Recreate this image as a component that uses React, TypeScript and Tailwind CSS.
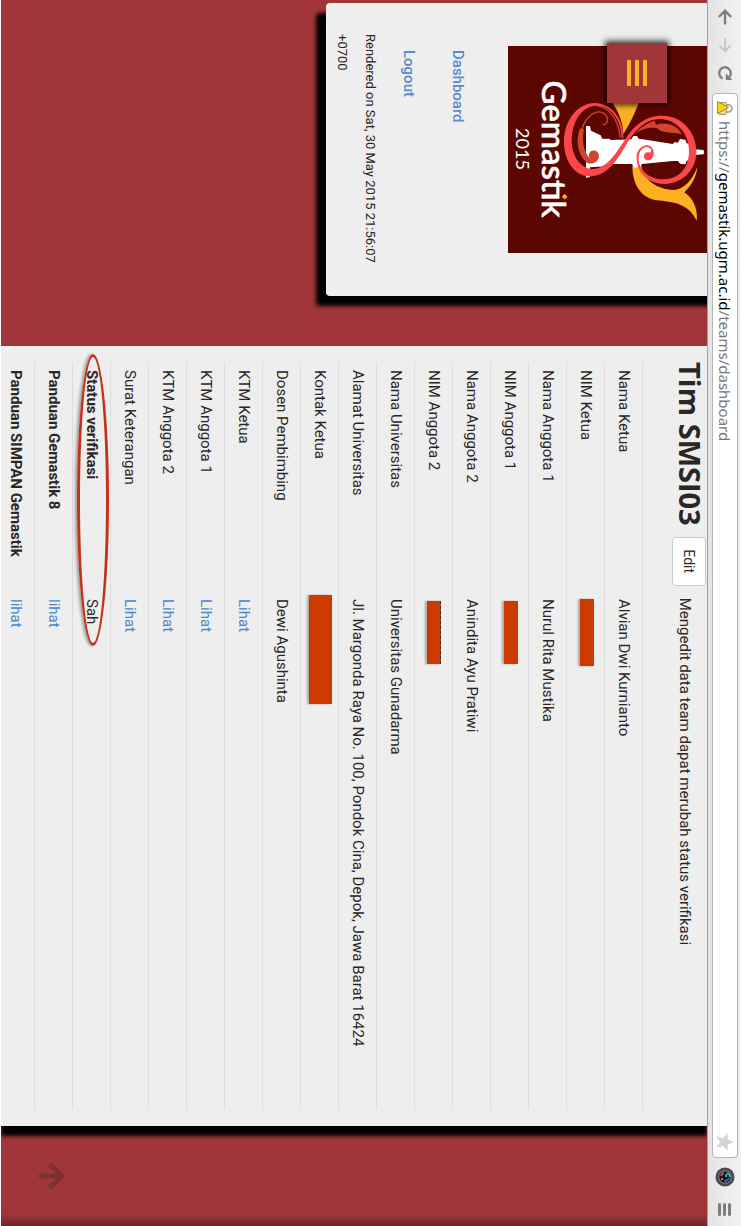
import type { ReactNode } from "react";

type Row = { label: string; value: ReactNode; bold?: boolean; circled?: boolean };

function Redacted({ className, label }: { className: string; label: string }) {
  return <span role="img" aria-label={label} className={`block bg-[#cc3a00] shadow-[0_2px_2px_rgba(0,0,0,0.3)] ${className}`} />;
}

function DocLink({ children }: { children: string }) {
  return (
    <a href="#" className="text-[#4a86cf]">
      {children}
    </a>
  );
}

const rows: Row[] = [
  { label: "Nama Ketua", value: "Alvian Dwi Kurnianto" },
  { label: "NIM Ketua", value: <Redacted label="NIM Ketua" className="mb-0.5 h-3.5 w-[67px]" /> },
  { label: "Nama Anggota 1", value: "Nurul Rita Mustika" },
  { label: "NIM Anggota 1", value: <Redacted label="NIM Anggota 1" className="mb-0.5 ml-0.5 h-3.5 w-[63px]" /> },
  { label: "Nama Anggota 2", value: "Anindita Ayu Pratiwi" },
  {
    label: "NIM Anggota 2",
    value: <Redacted label="NIM Anggota 2" className="ml-0.5 h-3.5 w-[63px] border-t border-dashed border-[#333]" />,
  },
  { label: "Nama Universitas", value: "Universitas Gunadarma" },
  { label: "Alamat Universitas", value: "Jl. Margonda Raya No. 100, Pondok Cina, Depok, Jawa Barat 16424" },
  { label: "Kontak Ketua", value: <Redacted label="Kontak Ketua" className="-ml-1 h-[23px] w-[109px]" /> },
  { label: "Dosen Pembimbing", value: "Dewi Agushinta" },
  { label: "KTM Ketua", value: <DocLink>Lihat</DocLink> },
  { label: "KTM Anggota 1", value: <DocLink>Lihat</DocLink> },
  { label: "KTM Anggota 2", value: <DocLink>Lihat</DocLink> },
  { label: "Surat Keterangan", value: <DocLink>Lihat</DocLink> },
  { label: "Status verifikasi", value: "Sah", bold: true, circled: true },
  { label: "Panduan Gemastik 8", value: <DocLink>lihat</DocLink>, bold: true },
  { label: "Panduan SIMPAN Gemastik", value: <DocLink>lihat</DocLink>, bold: true },
];

function BrowserBar() {
  return (
    <header className="relative z-10 flex h-[34px] shrink-0 items-start border-b border-[#a0a0a0] bg-linear-to-b from-[#f1f1f1] to-[#e4e4e4] pt-[3px] pl-[9px]">
      <div className="flex h-[26px] items-center gap-3">
        <button aria-label="Back" className="text-[#808080]">
          <svg width="16" height="16" viewBox="0 0 16 16" fill="none" stroke="currentColor" strokeWidth="2.4">
            <path d="M15.500 8H2.500M8 1.800L1.800 8L8 14.200" />
          </svg>
        </button>
        <button aria-label="Forward" className="text-[#c8c8c8]">
          <svg width="16" height="16" viewBox="0 0 16 16" fill="none" stroke="currentColor" strokeWidth="2">
            <path d="M1 8H14M8.500 2.500L14 8L8.500 13.500" />
          </svg>
        </button>
        <button aria-label="Reload" className="text-[#808080]">
          <svg width="16" height="16" viewBox="0 0 16 16">
            <path d="M13.400 10.400A5.800 5.800 0 1 1 12.300 4" fill="none" stroke="currentColor" strokeWidth="2.400" />
            <path d="M15 0.500V7.200H8.300Z" fill="currentColor" />
          </svg>
        </button>
      </div>
      <div className="ml-3 flex h-[26px] min-w-0 flex-1 items-center rounded-[4px] border border-[#b4b4b4] bg-white px-1.5">
        <svg width="16" height="16" viewBox="0 0 16 16" className="shrink-0">
          <path d="M5 7V4.500a3.500 3.500 0 0 1 7 0V7" fill="none" stroke="#a9a9a9" strokeWidth="1.800" />
          <rect x="2.500" y="6.500" width="12" height="8" rx="1" fill="#ead98c" stroke="#a89a5a" />
          <path d="M7.500 4.500L13.500 15.500H1.500Z" fill="#f5d516" stroke="#8a7420" strokeWidth="0.800" />
        </svg>
        <p className="ml-[5px] flex-1 truncate font-['Noto_Sans',sans-serif] text-[15px] leading-5 text-[#777]">
          https://<span className="text-black">gemastik.ugm.ac.id</span>/teams/dashboard
        </p>
        <button aria-label="Bookmark">
          <svg width="18" height="18" viewBox="0 0 18 18" fill="#d4d4d4">
            <path d="M9 0L11.400 6.200L18 6.600L12.900 10.800L14.600 17.500L9 13.800L3.400 17.500L5.100 10.800L0 6.600L6.600 6.200Z" />
          </svg>
        </button>
      </div>
      <div className="ml-[9px] flex h-[26px] items-center gap-4 pr-[10px]">
        <button aria-label="Camera">
          <svg width="20" height="20" viewBox="0 0 20 20">
            <circle cx="10" cy="10" r="9.500" fill="#4b4b4d" />
            <circle cx="10" cy="10" r="7" fill="#6d6e70" />
            <circle cx="10" cy="10" r="5.600" fill="#101522" />
            <path d="M6 8a4.500 4.500 0 0 1 4-3" stroke="#21b7d8" strokeWidth="1.800" fill="none" />
            <path d="M11 6a4 4 0 0 1 2.500 5" stroke="#4e6bdd" strokeWidth="1.600" fill="none" />
            <path d="M6 11a4.500 4.500 0 0 0 3 3" stroke="#d7389b" strokeWidth="2" fill="none" />
            <path d="M7 8.500l3 .5" stroke="#83d34a" strokeWidth="1.600" />
            <circle cx="12" cy="13" r="1" fill="#e9a33c" />
          </svg>
        </button>
        <button aria-label="Browser menu" className="flex flex-col gap-0.5">
          <span className="h-[3px] w-[13px] rounded-full bg-[#7d7d7d]" />
          <span className="h-[3px] w-[13px] rounded-full bg-[#7d7d7d]" />
          <span className="h-[3px] w-[13px] rounded-full bg-[#7d7d7d]" />
        </button>
      </div>
    </header>
  );
}

function Logo() {
  return (
    <svg viewBox="0 0 207 199" className="block w-full bg-[#5c0602]" role="img" aria-label="Gemastik 2015">
      <g transform="matrix(0 -0.33333 0.33333 0 -46 207)">
        <path d="M335 306L418 306C404 340 388 375 370 402C369 370 357 335 335 306Z" fill="#fdb022" />
        <path d="M397 498C397 548 420 590 462 599C505 606 562 602 590 662C594 640 586 598 553 577C575 555 590 530 592 500C575 545 550 568 520 570C470 568 430 540 424 496Z" fill="#fdb022" />
        <path d="M402 405C418 385 440 368 464 362L468 374C500 364 530 376 546 402C515 396 485 400 470 384C445 380 420 388 402 405Z" fill="#d2452f" />
        <path d="M258 378L270 378L273 392L302 406L307 416L328 416L332 420L394 418L400 408L411 408L416 416L428 418L518 432L524 426L534 428L540 417L556 419L560 430L568 431L574 447L610 450L613 457L610 463L574 466L568 481L560 482L556 493L540 491L534 483L518 483L426 492L420 501L402 503L396 492L328 492L322 499L270 502L270 531L258 533Z" fill="#ffffff" />
        <path d="M240 385C226 420 232 466 262 489C280 495 297 484 297 467C296 452 276 446 269 458C264 467 268 472 272 476C252 462 244 420 252 388Z" fill="#d2452f" />
        <path d="M246 390C252 355 285 328 308 338C330 350 324 376 308 374" fill="none" stroke="#d2452f" strokeWidth="4" />
        <path d="M290 316C335 325 356 365 360 412" fill="none" stroke="#d2452f" strokeWidth="4" />
        <path d="M370 414C370 354 334 309 283 309C228 311 192 366 192 425C192 485 226 529 270 529C332 527 360 462 388 419C412 384 440 357 480 357C535 359 567 405 567 454C567 504 537 538 492 538C446 538 415 508 416 476C416 456 426 441 440 441C455 442 458 456 447 460A11 11 0 0 0 443 480C455 481 463 468 461 455C458 438 443 432 430 438C416 444 408 460 410 478C413 520 444 552 494 552C550 550 590 508 589 454C588 395 546 347 486 347C436 347 402 378 380 412C350 455 326 502 282 507C242 508 215 468 215 422C215 372 240 320 288 317C332 317 363 356 365 414Z" fill="#fb474c" />
        <circle cx="444" cy="469" r="12" fill="#fb474c" />
        <rect x="-6" y="-6" width="12" height="12" transform="translate(194 590) rotate(45)" fill="#fda92a" />
      </g>
      <g fill="#ffffff" textAnchor="middle" className="font-['Lato',sans-serif]">
        <text x="103" y="165" fontSize="33" fontWeight="500" stroke="#ffffff" strokeWidth="0.6">
          Gemast&#305;k
        </text>
        <text x="103" y="191" fontSize="18">
          2015
        </text>
      </g>
    </svg>
  );
}

function Sidebar() {
  return (
    <aside className="relative -mt-5 ml-[3px] w-[293px] shrink-0 self-start rounded-[4px] bg-[#eeeeee] pt-5 pb-0.5 shadow-[10px_10px_4px_#000]">
      <div className="mx-[43px]">
        <Logo />
      </div>
      <button
        aria-label="Toggle menu"
        className="absolute top-15 left-10 flex h-[60px] w-[60px] flex-col items-center justify-center gap-1 bg-[#a1363a] shadow-[0_0_6px_2px_rgba(0,0,0,0.8)]"
      >
        <span className="h-1 w-[26px] bg-[#fdb022]" />
        <span className="h-1 w-[26px] bg-[#fdb022]" />
        <span className="h-1 w-[26px] bg-[#fdb022]" />
      </button>
      <nav className="mt-10 ml-[47px] flex flex-col gap-[29px] text-[15px] leading-5 font-medium text-[#5a8bcc]">
        <a href="#">Dashboard</a>
        <a href="#">Logout</a>
      </nav>
      <p className="mt-[15px] ml-[31px] w-[240px] text-[13px] leading-7">Rendered on Sat, 30 May 2015 21:56:07 +0700</p>
    </aside>
  );
}

function TeamPanel() {
  return (
    <main className="mr-[100px] ml-[50px] min-w-0 flex-1 bg-[#eeeeee] px-4 shadow-[10px_0_4px_#000]">
      <div className="flex h-16 items-start">
        <h1 className="font-['Open_Sans',sans-serif] text-[29px] leading-[34px] font-bold whitespace-nowrap">Tim SMSI03</h1>
        <button className="mt-px ml-[11px] h-[34px] w-[49px] rounded-[4px] border border-[#cccccc] bg-white text-[14px]">Edit</button>
        <p className="mt-3 ml-3 text-[15px] leading-5 whitespace-nowrap">Mengedit data team dapat merubah status verifikasi</p>
      </div>
      <table className="w-full table-fixed border-collapse text-left text-[15px] leading-5">
        <tbody>
          {rows.map((row) => (
            <tr key={row.label} className="h-[38px] border-t border-[#dddddd]">
              <th scope="row" className={`relative w-[229px] px-2 pt-0 pb-0.5 ${row.bold ? "font-bold" : "font-normal"}`}>
                {row.label}
                {row.circled && (
                  <span className="absolute top-px -left-2 h-8 w-[292px] rounded-[50%] border-[3px] border-[#c2321c] shadow-[0_2px_3px_rgba(0,0,0,0.35)]" />
                )}
              </th>
              <td className="px-2 pt-0 pb-0.5">{row.value}</td>
            </tr>
          ))}
        </tbody>
      </table>
    </main>
  );
}

export default function App() {
  return (
    <div className="h-screen w-screen overflow-hidden">
      <div className="relative flex h-[100vw] w-[100vh] origin-top-left translate-x-[100vw] rotate-90 flex-col overflow-hidden border-b border-white bg-[#a1363a] font-['Roboto',sans-serif] text-[#2b2626]">
        <BrowserBar />
        <div className="flex min-h-0 flex-1">
          <Sidebar />
          <TeamPanel />
        </div>
        <a href="#" aria-label="Back to top" className="absolute right-9 bottom-[38px] text-[#7d3033]">
          <svg width="28" height="26" viewBox="0 0 28 26" fill="none" stroke="currentColor" strokeWidth="5">
            <path d="M14 26V4M2 15.500L14 3.500L26 15.500" />
          </svg>
        </a>
        <div className="pointer-events-none absolute inset-y-0 right-0 w-3 bg-linear-to-r from-transparent to-black/30" />
      </div>
    </div>
  );
}
